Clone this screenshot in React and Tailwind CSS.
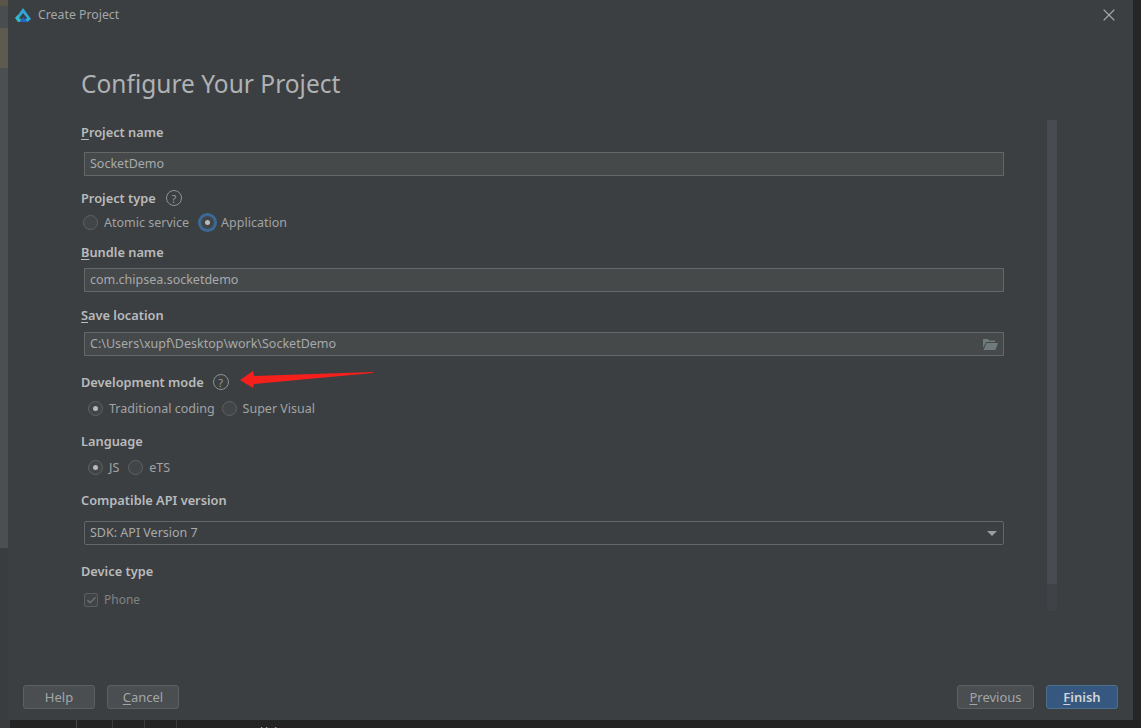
import { X, Check } from 'lucide-react'

const font = { fontFamily: '"Noto Sans", sans-serif' }

// ── small bits ────────────────────────────────────────────────
function Label({ mn, children, className = '' }) {
  return (
    <div className={`text-[12.8px] leading-[18px] font-semibold text-[#b9bbbd] whitespace-pre ${className}`}>
      {mn && <span className="underline underline-offset-2">{mn}</span>}{children}
    </div>
  )
}

function Help() {
  return (
    <span className="flex items-center justify-center w-4 h-4 rounded-full border border-[#8f9192] text-[11px] leading-none text-[#9a9c9d]">?</span>
  )
}

function Radio({ label, checked, focused, className = '' }) {
  return (
    <div className={`flex items-center ${className}`}>
      <span className={`flex items-center justify-center w-[15px] h-[15px] rounded-full border bg-[#414547] ${focused ? 'border-[#3c6a98] ring-2 ring-[#3c6a98]' : 'border-[#5f6263]'}`}>
        {checked && <span className="w-[5px] h-[5px] rounded-full bg-[#b8babb]" />}
      </span>
      <span className="ml-[6px] pt-[1px] text-[12.5px] leading-[18px] text-[#a0a3a5]">{label}</span>
    </div>
  )
}

function Field({ children, right, className = '' }) {
  return (
    <div className={`flex items-center justify-between ml-[3px] w-[920px] h-[24px] border border-[#646667] bg-[#45494a] pl-[5px] pr-[5px] text-[12.5px] text-[#a7aaac] ${className}`}>
      <span className="pt-[1px]">{children}</span>
      {right}
    </div>
  )
}

function Btn({ children, primary, className = '' }) {
  return (
    <button className={`h-[24px] rounded-[3px] border text-[13px] leading-none ${primary ? 'bg-[#365880] border-[#4c708c] text-[#d3d6d8] font-semibold' : 'bg-[#4a4e50] border-[#5e6060] text-[#a3a6a8]'} ${className}`}>
      {children}
    </button>
  )
}

function Logo() {
  return (
    <svg width="16" height="14" viewBox="0 0 16 14">
      <path d="M8 0 L16 11 L12.5 14 L10 11.5 L12 10 L8 5 L5 9 L3 7 Z" fill="#2fa6dc" />
      <path d="M0 10 L3 6.5 L5 9 L4 10.5 L6.5 11 L5 14 L3 14 Z" fill="#35b8c9" />
      <path d="M8 9 L12.5 14 L5 14 Z" fill="#2468c4" />
    </svg>
  )
}

function OpenFolder() {
  return (
    <svg width="15" height="11" viewBox="0 0 15 11">
      <path d="M0 0 H5 L6 1.5 H12 V3 H3 L0 9 Z" fill="#6f7a7d" />
      <path d="M3.5 4 H15 L12.5 11 H0.5 Z" fill="#6f7a7d" />
    </svg>
  )
}

function Arrow() {
  return (
    <svg className="absolute left-[240px] top-[370px]" width="134" height="19" viewBox="0 0 134 19">
      <path d="M0 10 L13 1 L14 6 L133 2 L133 3 L14 14 L13 18 Z" fill="#f5201c" />
    </svg>
  )
}

// ── App ───────────────────────────────────────────────────────
export default function App() {
  return (
    <div className="w-[1141px] h-[728px] relative overflow-hidden bg-[#3a3c3d]" style={font}>
      <div className="flex h-[720px]">
        {/* window behind, left edge */}
        <div className="flex flex-col w-[8px]">
          <div className="h-[6px] bg-[#5a5548]" />
          <div className="h-[22px] bg-[#4a4c4d]" />
          <div className="h-[40px] bg-[#5d5a50]" />
          <div className="h-[480px] bg-[#4c4e4f]" />
        </div>
        <div className="flex flex-col w-[1125px] bg-[#3c3f41]">
          {/* title bar */}
          <div className="flex items-center justify-between h-[30px] pl-[7px] pr-[14px]">
            <div className="flex items-center gap-[7px] text-[12.3px] text-[#a3a6a8]">
              <Logo />
              <span>Create Project</span>
            </div>
            <X size={20} strokeWidth={1.3} className="text-[#a8a9aa]" />
          </div>

          {/* content */}
          <div className="flex flex-1 pl-[73px]">
            <div className="w-[966px]">
              <h1 className="mt-[37px] text-[24.5px] leading-[34px] font-normal text-[#afb2b4]">Configure Your Project</h1>
              <Label mn="P" className="mt-[22px]">roject name</Label>
              <Field className="mt-[11px]">SocketDemo</Field>
              <div className="flex items-center gap-[10px] mt-[13px]">
                <Label>Project type</Label>
                <Help />
              </div>
              <div className="flex items-center mt-[6px] ml-[2px]">
                <Radio label="Atomic service" />
                <Radio label="Application" checked focused className="ml-[11px]" />
              </div>
              <Label mn="B" className="mt-[11px]">undle name</Label>
              <Field className="mt-[7px]">com.chipsea.socketdemo</Field>
              <Label mn="S" className="mt-[14px]">ave location</Label>
              <Field className="mt-[8px]" right={<OpenFolder />}>C:\Users\xupf\Desktop\work\SocketDemo</Field>
              <div className="flex items-center gap-[9px] mt-[17px]">
                <Label>Development mode</Label>
                <Help />
              </div>
              <div className="flex items-center mt-[8px] ml-[7px]">
                <Radio label="Traditional coding" checked />
                <Radio label="Super Visual" className="ml-[7px]" />
              </div>
              <Label className="mt-[14px]">Language</Label>
              <div className="flex items-center mt-[8px] ml-[7px]">
                <Radio label="JS" checked />
                <Radio label="eTS" className="ml-[9px]" />
              </div>
              <Label className="mt-[14px]">Compatible API version</Label>
              <div className="mt-[12px] flex items-center justify-between ml-[3px] w-[920px] h-[24px] rounded-[2px] border border-[#646667] bg-[#3c3f41] pl-[5px] pr-[6px] text-[12.5px] text-[#a7aaac]">
                <span className="pt-[1px]">SDK: API Version 7</span>
                <span className="w-0 h-0 border-x-[5px] border-x-transparent border-t-[5px] border-t-[#9a9c9d]" />
              </div>
              <Label className="mt-[17px]">Device type</Label>
              <div className="flex items-center mt-[11px] ml-[3px]">
                <span className="flex items-center justify-center w-[14px] h-[14px] rounded-[2px] border border-[#5b5e60] bg-[#414446] text-[#6f7274]">
                  <Check size={11} strokeWidth={3} />
                </span>
                <span className="ml-[6px] text-[12px] leading-[18px] text-[#808385]">Phone</span>
              </div>
            </div>
            {/* scrollbar */}
            <div className="mt-[90px] w-[10px] h-[491px] bg-[#3f4247]">
              <div className="h-[464px] bg-[#494b52]" />
            </div>
          </div>

          {/* footer */}
          <div className="flex items-center justify-between px-[15px] pb-[11px]">
            <div className="flex gap-[12px]">
              <Btn className="w-[72px]">Help</Btn>
              <Btn className="w-[72px]"><span className="underline underline-offset-2">C</span>ancel</Btn>
            </div>
            <div className="flex gap-[12px]">
              <Btn className="w-[77px]"><span className="underline underline-offset-2">P</span>revious</Btn>
              <Btn primary className="w-[72px]"><span className="underline underline-offset-2">F</span>inish</Btn>
            </div>
          </div>
        </div>
        <div className="flex-1 bg-[#262626]" />
      </div>

      {/* window behind, bottom edge */}
      <div className="flex h-[8px] ml-[10px] bg-[#242424] overflow-hidden">
        <div className="w-[67px] border-r border-[#4a4a4a]" />
        <div className="w-[36px] border-r border-[#3c3c3c]" />
        <div className="w-[32px] border-r border-[#3c3c3c]" />
        <div className="w-[32px] border-r border-[#3c3c3c]" />
        <div className="ml-[83px] pt-[4px] text-[11px] leading-[14px] text-[#c8c2a0]">Hel</div>
      </div>
      <Arrow />
    </div>
  )
}
